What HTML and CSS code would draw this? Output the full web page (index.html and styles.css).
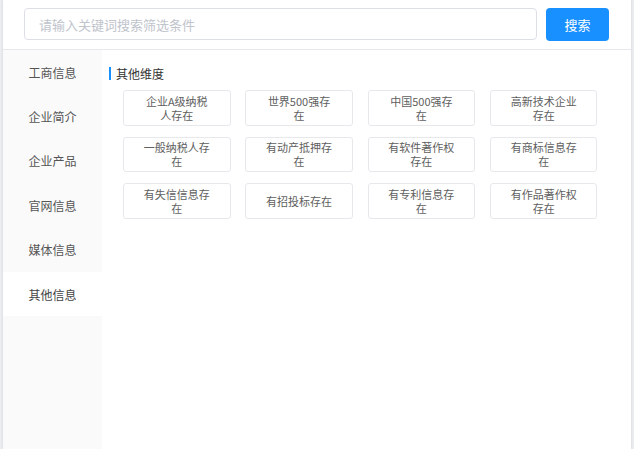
FILE: index.html
```html
<!DOCTYPE html>
<html lang="zh">
<head>
<meta charset="utf-8">
<link rel="stylesheet" href="styles.css">
</head>
<body>
<div class="panel">
  <div class="header">
    <input class="search-input" type="text" placeholder="请输入关键词搜索筛选条件">
    <button class="search-btn">搜索</button>
  </div>
  <div class="main">
    <ul class="sidebar">
      <li class="side-item">工商信息</li>
      <li class="side-item">企业简介</li>
      <li class="side-item">企业产品</li>
      <li class="side-item">官网信息</li>
      <li class="side-item">媒体信息</li>
      <li class="side-item active">其他信息</li>
    </ul>
    <div class="content">
      <div class="section-title">其他维度</div>
      <div class="tag-grid">
        <div class="tag">企业A级纳税人存在</div>
        <div class="tag">世界500强存在</div>
        <div class="tag">中国500强存在</div>
        <div class="tag">高新技术企业存在</div>
        <div class="tag">一般纳税人存在</div>
        <div class="tag">有动产抵押存在</div>
        <div class="tag">有软件著作权存在</div>
        <div class="tag">有商标信息存在</div>
        <div class="tag">有失信信息存在</div>
        <div class="tag">有招投标存在</div>
        <div class="tag">有专利信息存在</div>
        <div class="tag">有作品著作权存在</div>
      </div>
    </div>
  </div>
</div>
</body>
</html>
```
FILE: styles.css
```css
* { box-sizing: border-box; }
html, body {
  margin: 0;
  height: 100%;
  overflow: hidden;
}
body {
  background: #eceef1;
  font-family: "Noto Sans CJK SC", "Noto Sans", sans-serif;
}
.panel {
  margin-left: 3px;
  width: 628px;
  height: 449px;
  background: #fff;
  box-shadow: 0 0 3px rgba(0, 0, 0, 0.12);
  display: flex;
  flex-direction: column;
}
.header {
  height: 50px;
  flex: none;
  border-bottom: 1px solid #e6e8eb;
  display: flex;
  align-items: flex-start;
  padding: 8px 22px 0 21px;
  gap: 9px;
}
.search-input {
  width: 513px;
  height: 32px;
  border: 1px solid #dcdfe6;
  border-radius: 4px;
  padding: 0 14px;
  font-family: inherit;
  font-size: 13px;
  color: #333;
  outline: none;
}
.search-input::placeholder {
  color: #c0c4cc;
}
.search-btn {
  width: 63px;
  height: 33px;
  border: none;
  border-radius: 4px;
  background: #1890ff;
  color: #fff;
  font-family: inherit;
  font-size: 13px;
  padding: 0;
}
.main {
  flex: 1;
  display: flex;
}
.sidebar {
  list-style: none;
  margin: 0;
  padding: 0;
  width: 99px;
  flex: none;
  background: #fafafa;
}
.side-item {
  height: 44.4px;
  display: flex;
  align-items: center;
  justify-content: center;
  font-size: 12px;
  color: #555;
}
.side-item.active {
  background: #fff;
  color: #444;
}
.content {
  flex: 1;
  padding: 17px 0 0 7px;
}
.section-title {
  border-left: 2px solid #1890ff;
  padding-left: 5px;
  font-size: 12px;
  line-height: 13px;
  color: #333;
}
.tag-grid {
  margin: 10px 0 0 14px;
  display: grid;
  grid-template-columns: repeat(4, 107.5px);
  grid-auto-rows: 35.5px;
  column-gap: 14.8px;
  row-gap: 11px;
}
.tag {
  border: 1px solid #e6e8eb;
  border-radius: 3px;
  display: flex;
  align-items: center;
  justify-content: center;
  text-align: center;
  padding: 0 19px;
  font-size: 11px;
  line-height: 14px;
  color: #606060;
}
```
